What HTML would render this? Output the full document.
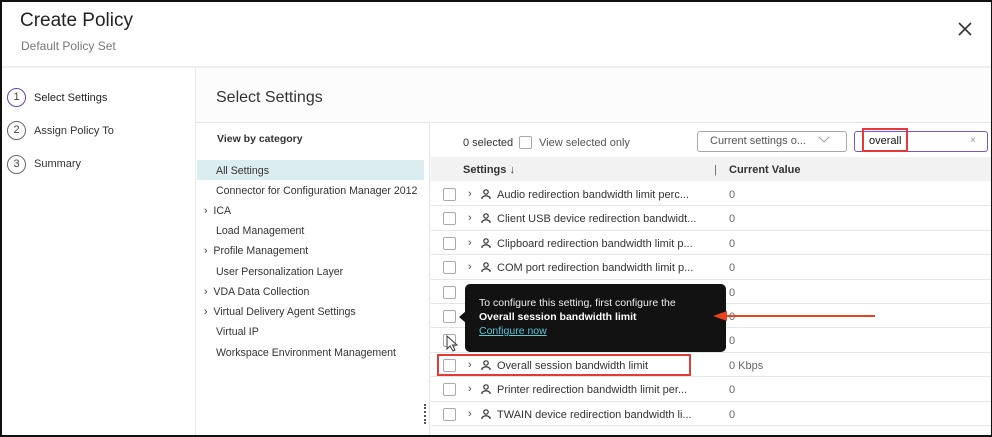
<!DOCTYPE html>
<html><head><meta charset="utf-8"><style>
*{box-sizing:border-box;margin:0;padding:0}
body{width:992px;height:437px;overflow:hidden;font-family:"Liberation Sans",sans-serif;background:#fff;position:relative;color:#222}
.a{position:absolute}
.frame{left:0;top:0;width:992px;height:437px;border:2px solid #111;border-right-width:1px;z-index:50;pointer-events:none}
.t{font-size:11px;color:#333;white-space:nowrap}
.c{font-size:10.6px}
.cb{width:13px;height:13px;border:1px solid #aaa;border-radius:2px;background:#fff}
.row{left:431px;width:561px;height:24.4px;border-bottom:1px solid #e6e6e6;background:#fff}
.row .cb{position:absolute;left:12px;top:6px}
.row .chev{position:absolute;left:37px;top:6px;font-size:11px;color:#444}
.row svg{position:absolute;left:50px;top:7px}
.row .nm{position:absolute;left:66px;top:7px}
.row .v{position:absolute;left:298px;top:7px;color:#666}
.step{width:19px;height:19px;border:1.5px solid #666;border-radius:50%;font-size:11px;text-align:center;line-height:16px;color:#444}
</style></head><body>
<div class="a" style="left:20px;top:10px;font-size:19px;color:#222;font-weight:500">Create Policy</div>
<div class="a" style="left:21px;top:39px;font-size:12px;color:#777">Default Policy Set</div>
<svg class="a" style="left:958px;top:22px" width="14" height="14" viewBox="0 0 14 14"><path d="M1 1L13 13M13 1L1 13" stroke="#333" stroke-width="1.6"/></svg>
<div class="a" style="left:0;top:66px;width:992px;height:2px;background:#eee"></div>
<div class="a" style="left:195px;top:68px;width:797px;height:369px;background:#fcfcfc;border-left:1px solid #e8e8e8"></div>
<div class="a" style="left:196px;top:122px;width:234px;height:315px;background:#fff;border-top:1px solid #e4e4e4;border-right:1px solid #e4e4e4"></div>
<div class="a step" style="left:7px;top:88px;border-color:#6a3fc0">1</div>
<div class="a t" style="left:34px;top:92px;color:#222">Select Settings</div>
<div class="a step" style="left:7px;top:121px">2</div>
<div class="a t" style="left:34px;top:125px">Assign Policy To</div>
<div class="a step" style="left:7px;top:155px">3</div>
<div class="a t" style="left:34px;top:158px">Summary</div>
<div class="a" style="left:216px;top:89px;font-size:16px;color:#333">Select Settings</div>
<div class="a t" style="left:217px;top:133px;font-weight:bold;font-size:10.5px">View by category</div>
<div class="a" style="left:197px;top:160px;width:227px;height:20px;background:#dcedf0"></div>
<div class="a t c" style="left:216px;top:165px">All Settings</div>
<div class="a t c" style="left:216px;top:185px">Connector for Configuration Manager 2012</div>
<div class="a t c" style="left:204px;top:205px">›&nbsp; ICA</div>
<div class="a t c" style="left:216px;top:225px">Load Management</div>
<div class="a t c" style="left:204px;top:245px">›&nbsp; Profile Management</div>
<div class="a t c" style="left:216px;top:266px">User Personalization Layer</div>
<div class="a t c" style="left:204px;top:286px">›&nbsp; VDA Data Collection</div>
<div class="a t c" style="left:204px;top:306px">›&nbsp; Virtual Delivery Agent Settings</div>
<div class="a t c" style="left:216px;top:326px">Virtual IP</div>
<div class="a t c" style="left:216px;top:347px">Workspace Environment Management</div>
<div class="a" style="left:424px;top:404px;width:2px;height:20px;border-left:2px dotted #555"></div>
<div class="a" style="left:431px;top:122px;width:561px;height:35px;background:#fff;border-top:1px solid #e4e4e4"></div>
<div class="a t" style="left:463px;top:137px">0 selected</div>
<div class="a cb" style="left:519px;top:136px"></div>
<div class="a t" style="left:539px;top:137px;color:#555">View selected only</div>
<div class="a" style="left:697px;top:131px;width:150px;height:21px;border:1px solid #aaa;border-radius:3px;background:#fff"></div>
<div class="a t" style="left:710px;top:135px;color:#555">Current settings o...</div>
<div class="a" style="left:820px;top:133px;width:8px;height:8px;border-right:1px solid #999;border-bottom:1px solid #999;transform:rotate(45deg)"></div>
<div class="a" style="left:854px;top:131px;width:134px;height:21px;border:1.5px solid #7b55c8;border-radius:3px;background:#fff"></div>
<div class="a t" style="left:869px;top:135px;color:#111">overall</div>
<div class="a" style="left:862px;top:128px;width:46px;height:24px;border:2px solid #e53935"></div>
<div class="a" style="left:970px;top:135px;font-size:10px;color:#999">×</div>
<div class="a" style="left:431px;top:157px;width:561px;height:24px;background:#f2f2f2"></div>
<div class="a t" style="left:463px;top:164px;font-weight:bold">Settings ↓</div>
<div class="a t" style="left:714px;top:164px;color:#666">|</div>
<div class="a t" style="left:729px;top:164px;font-weight:bold">Current Value</div>

<div class="a row" style="top:182px"><div class="cb"></div><span class="chev">›</span><svg width="10" height="10" viewBox="0 0 10 10"><circle cx="5" cy="3" r="2.2" fill="none" stroke="#333" stroke-width="1.2"/><path d="M1 10V8.5Q5 5 9 8.5V10" fill="none" stroke="#333" stroke-width="1.2"/></svg><span class="nm t">Audio redirection bandwidth limit perc...</span><span class="v t">0</span></div>
<div class="a row" style="top:206.4px"><div class="cb"></div><span class="chev">›</span><svg width="10" height="10" viewBox="0 0 10 10"><circle cx="5" cy="3" r="2.2" fill="none" stroke="#333" stroke-width="1.2"/><path d="M1 10V8.5Q5 5 9 8.5V10" fill="none" stroke="#333" stroke-width="1.2"/></svg><span class="nm t">Client USB device redirection bandwidt...</span><span class="v t">0</span></div>
<div class="a row" style="top:230.8px"><div class="cb"></div><span class="chev">›</span><svg width="10" height="10" viewBox="0 0 10 10"><circle cx="5" cy="3" r="2.2" fill="none" stroke="#333" stroke-width="1.2"/><path d="M1 10V8.5Q5 5 9 8.5V10" fill="none" stroke="#333" stroke-width="1.2"/></svg><span class="nm t">Clipboard redirection bandwidth limit p...</span><span class="v t">0</span></div>
<div class="a row" style="top:255.2px"><div class="cb"></div><span class="chev">›</span><svg width="10" height="10" viewBox="0 0 10 10"><circle cx="5" cy="3" r="2.2" fill="none" stroke="#333" stroke-width="1.2"/><path d="M1 10V8.5Q5 5 9 8.5V10" fill="none" stroke="#333" stroke-width="1.2"/></svg><span class="nm t">COM port redirection bandwidth limit p...</span><span class="v t">0</span></div>
<div class="a row" style="top:279.6px"><div class="cb"></div><span class="v t">0</span></div>
<div class="a row" style="top:304px"><div class="cb"></div><span class="v t">0</span></div>
<div class="a row" style="top:328.4px"><div class="cb"></div><span class="v t">0</span></div>
<div class="a row" style="top:352.8px"><div class="cb"></div><span class="chev">›</span><svg width="10" height="10" viewBox="0 0 10 10"><circle cx="5" cy="3" r="2.2" fill="none" stroke="#333" stroke-width="1.2"/><path d="M1 10V8.5Q5 5 9 8.5V10" fill="none" stroke="#333" stroke-width="1.2"/></svg><span class="nm t">Overall session bandwidth limit</span><span class="v t">0 Kbps</span></div>
<div class="a row" style="top:377.2px"><div class="cb"></div><span class="chev">›</span><svg width="10" height="10" viewBox="0 0 10 10"><circle cx="5" cy="3" r="2.2" fill="none" stroke="#333" stroke-width="1.2"/><path d="M1 10V8.5Q5 5 9 8.5V10" fill="none" stroke="#333" stroke-width="1.2"/></svg><span class="nm t">Printer redirection bandwidth limit per...</span><span class="v t">0</span></div>
<div class="a row" style="top:401.6px"><div class="cb"></div><span class="chev">›</span><svg width="10" height="10" viewBox="0 0 10 10"><circle cx="5" cy="3" r="2.2" fill="none" stroke="#333" stroke-width="1.2"/><path d="M1 10V8.5Q5 5 9 8.5V10" fill="none" stroke="#333" stroke-width="1.2"/></svg><span class="nm t">TWAIN device redirection bandwidth li...</span><span class="v t">0</span></div>
<div class="a" style="left:437px;top:354px;width:254px;height:22px;border:2px solid #e53935"></div>

<div class="a" style="left:465px;top:284px;width:261px;height:68px;background:#121212;border-radius:5px"></div>
<div class="a" style="left:459px;top:311px;width:0;height:0;border-top:6px solid transparent;border-bottom:6px solid transparent;border-right:7px solid #121212"></div>
<div class="a t" style="left:479px;top:297px;color:#eee;font-size:10.5px">To configure this setting, first configure the</div>
<div class="a t" style="left:479px;top:311px;color:#fff;font-size:10.5px;font-weight:bold">Overall session bandwidth limit</div>
<div class="a t" style="left:479px;top:325px;color:#5cc7d6;font-size:10.5px;text-decoration:underline">Configure now</div>
<div class="a" style="left:726px;top:315px;width:149px;height:2px;background:#e8431c"></div>
<div class="a" style="left:713px;top:311px;width:0;height:0;border-top:5px solid transparent;border-bottom:5px solid transparent;border-right:14px solid #e8431c"></div>
<svg class="a" style="left:446px;top:335px" width="12" height="17" viewBox="0 0 12 17"><path d="M1 1V14L4 11L7 16L9 15L6.5 10H11Z" fill="#fff" stroke="#333" stroke-width="1"/></svg>
<div class="a frame"></div>
</body></html>
